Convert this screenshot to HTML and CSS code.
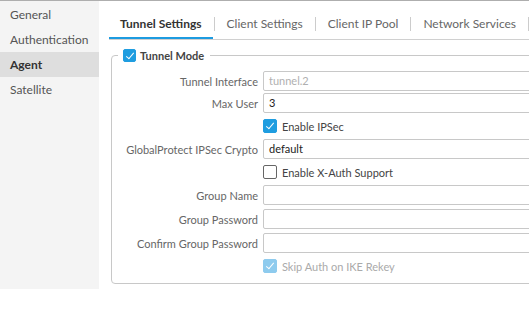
FILE: index.html
```html
<html>
    <head>
        <meta name="viewport" content="width=device-width, initial-scale=1.0">
        <link rel="stylesheet" href="styles.css">
    </head>
    <body>
        <div class="page">
            <nav class="sidebar">
                <div class="side-item">General</div>
                <div class="side-item">Authentication</div>
                <div class="side-item active">Agent</div>
                <div class="side-item">Satellite</div>
            </nav>

            <main class="content">
                <div class="tabs">
                    <div class="tab active">Tunnel Settings</div>
                    <span class="tab-sep"></span>
                    <div class="tab">Client Settings</div>
                    <span class="tab-sep"></span>
                    <div class="tab">Client IP Pool</div>
                    <span class="tab-sep"></span>
                    <div class="tab">Network Services</div>
                    <span class="tab-sep"></span>
                </div>

                <fieldset class="group">
                    <legend class="group-title">
                        <span class="check checked small"></span>
                        Tunnel Mode
                    </legend>

                    <div class="form">
                        <div class="row tight">
                            <label class="field-label">Tunnel Interface</label>
                            <div class="input disabled">tunnel.2</div>
                        </div>
                        <div class="row">
                            <label class="field-label">Max User</label>
                            <div class="input">3</div>
                        </div>
                        <div class="row check-row">
                            <span></span>
                            <div class="check-field">
                                <span class="check checked"></span>
                                Enable IPSec
                            </div>
                        </div>
                        <div class="row">
                            <label class="field-label">GlobalProtect IPSec Crypto</label>
                            <div class="input">default</div>
                        </div>
                        <div class="row check-row">
                            <span></span>
                            <div class="check-field">
                                <span class="check"></span>
                                Enable X-Auth Support
                            </div>
                        </div>
                        <div class="row">
                            <label class="field-label">Group Name</label>
                            <div class="input"></div>
                        </div>
                        <div class="row">
                            <label class="field-label">Group Password</label>
                            <div class="input"></div>
                        </div>
                        <div class="row">
                            <label class="field-label">Confirm Group Password</label>
                            <div class="input"></div>
                        </div>
                        <div class="row check-row">
                            <span></span>
                            <div class="check-field muted">
                                <span class="check checked faded"></span>
                                Skip Auth on IKE Rekey
                            </div>
                        </div>
                    </div>
                </fieldset>
            </main>
        </div>
    </body>
</html>
```

FILE: styles.css
```css
body {
    margin: 0;
    overflow: hidden;
    background: #fff;
    font-family: Lato, "Open Sans", sans-serif;
    font-size: 11px;
    color: #333;
}

div.page {
    display: flex;
    align-items: flex-start;
    border-top: 1px solid #aeaeae;
    width: 760px;
}

nav.sidebar {
    width: 99px;
    height: 288px;
    padding-top: 1px;
    box-sizing: border-box;
    background: #f4f4f4;
    flex: 0 0 auto;
}

.side-item {
    height: 25px;
    line-height: 25px;
    padding-left: 10px;
    color: #555;
    font-size: 12px;
}

.side-item.active {
    background: #dedede;
    color: #333;
    font-weight: bold;
}

main.content {
    flex: 1 1 auto;
    padding-left: 10px;
}

div.tabs {
    display: flex;
    align-items: center;
    height: 38px;
    border-bottom: 1px solid #d0d0d0;
}

.tab {
    height: 38px;
    line-height: 46px;
    box-sizing: border-box;
    padding: 0 11px;
    font-size: 12px;
    color: #666;
}

.tab.active {
    color: #333;
    font-weight: bold;
    border-bottom: 2px solid #1d9be0;
}

.tab-sep {
    width: 1px;
    height: 14px;
    margin: 8px 1px 0;
    background: #ccc;
}

fieldset.group {
    margin: 8px 0 0 2px;
    padding: 0 0 8px;
    border: 1px solid #c8c8c8;
    border-radius: 4px;
}

legend.group-title {
    margin-left: 6px;
    padding: 0 6px 0 5px;
    font-size: 11px;
    font-weight: bold;
    color: #444;
    line-height: 15px;
    display: flex;
    align-items: center;
}

legend.group-title .check {
    margin-right: 4px;
}

div.form {
    display: flex;
    flex-direction: column;
    gap: 4px;
    padding-top: 8px;
}

.row {
    display: grid;
    grid-template-columns: 146px 1fr;
    column-gap: 5px;
    align-items: center;
}

.row.tight {
    margin-bottom: -2px;
}

.row.check-row {
    height: 18px;
}

.field-label {
    text-align: right;
    color: #666;
    white-space: nowrap;
}

.input {
    height: 20px;
    line-height: 18px;
    box-sizing: border-box;
    border: 1px solid #c8c8c8;
    border-radius: 2px;
    padding: 0 5px;
    color: #222;
}

.input.disabled {
    color: #b0b0b0;
}

.check-field {
    display: flex;
    align-items: center;
    color: #444;
}

.check-field.muted {
    color: #aaa;
}

.check {
    display: inline-block;
    position: relative;
    width: 14px;
    height: 14px;
    box-sizing: border-box;
    border: 1px solid #666;
    border-radius: 2px;
    background: #fff;
    margin-right: 5px;
}

.check.small {
    width: 13px;
    height: 13px;
}

.check.checked {
    background: #1f9de0;
    border-color: #1f9de0;
}

.check.checked::after {
    content: "";
    position: absolute;
    left: 4px;
    top: 1px;
    width: 3px;
    height: 7px;
    border: solid #fff;
    border-width: 0 1.5px 1.5px 0;
    transform: rotate(40deg);
}

.check.faded {
    background: #8ecbee;
    border-color: #8ecbee;
}
```
